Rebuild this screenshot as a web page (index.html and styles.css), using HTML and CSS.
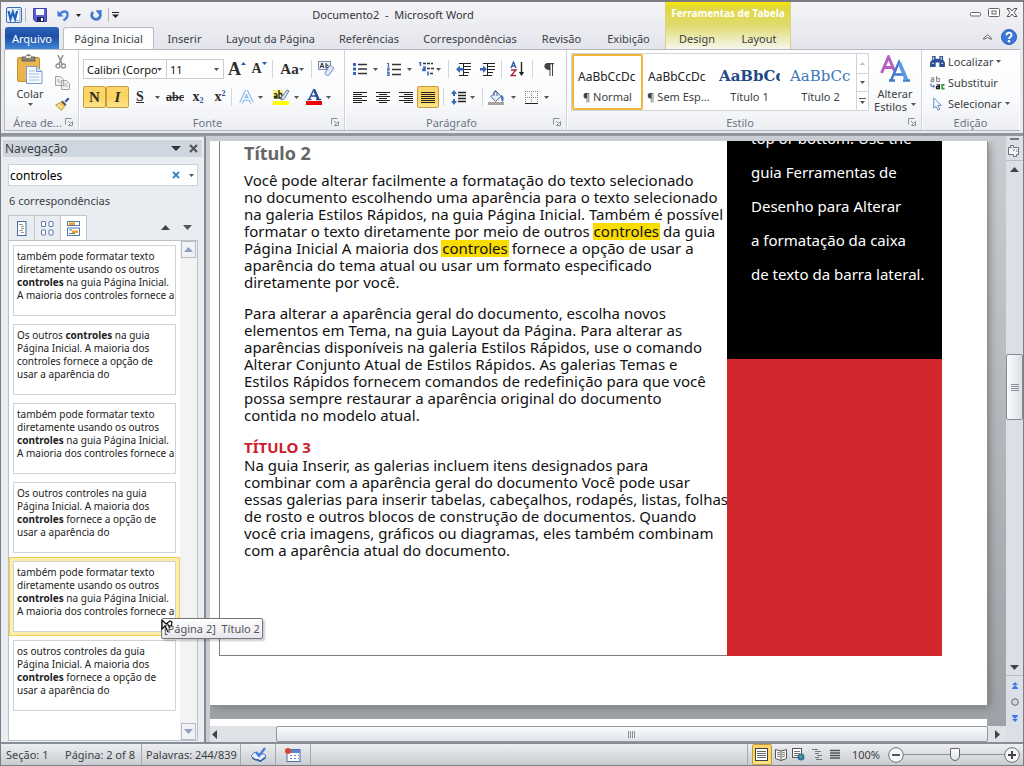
FILE: index.html
```html
<!DOCTYPE html>
<html lang="pt-BR">
<head>
<meta charset="utf-8">
<title>Documento2 - Microsoft Word</title>
<link rel="stylesheet" href="styles.css">
</head>
<body>
<svg class="defs" aria-hidden="true">
  <symbol id="caret" viewBox="0 0 5 3"><path d="M0 0h5L2.500 3z" fill="#555"/></symbol>
  <symbol id="launcher" viewBox="0 0 8 8"><path d="M.5 6.500v-6h6M3 3l3 3M7.500 3.500v4h-4z" fill="none" stroke="#8b9096"/></symbol>
</svg>
<div class="app">
  <header class="header">
    <div class="titlebar">
      <div class="quick">
        <button class="ib w22" aria-label="Word"><svg width="16" height="16" viewBox="0 0 16 16"><rect x=".5" y=".5" width="15" height="15" rx="1.500" fill="#e7f1fb" stroke="#3a6db3"/><path d="M11 2.500h3v11h-4" fill="#fff" stroke="#8fb3de"/><path d="M2.500 4l2 8 2.300-7 2.300 7 2-8" fill="none" stroke="#1f63b8" stroke-width="2.200"/></svg></button>
        <span class="qs"></span>
        <button class="ib w28" aria-label="Salvar"><svg width="14" height="14" viewBox="0 0 14 14"><path d="M.5.5h13v13h-11l-2-2z" fill="#5a5fd4" stroke="#3c41a8"/><path d="M3 1h8v6H3z" fill="#f4f6ff"/><path d="M4 9h7v5H4z" fill="#20245e"/><path d="M8 10h2v3H8z" fill="#fff"/></svg></button>
        <button class="ib w18" aria-label="Desfazer"><svg width="13" height="13" viewBox="0 0 13 13"><path d="M3.500 4.500C6.500 1.500 10.500 2 10.500 5.500c0 2.500-1.500 4.500-4 6" fill="none" stroke="#4a82da" stroke-width="2.500"/><path d="M.5 1.500v6h6z" fill="#3f78d4"/></svg></button>
        <button class="ib w12" aria-label="Opções de desfazer"><svg width="5" height="3" viewBox="0 0 5 3"><path d="M0 0h5L2.500 3z" fill="#222"/></svg></button>
        <button class="ib w24" aria-label="Refazer"><svg width="13" height="13" viewBox="0 0 13 13"><path d="M3 3A4.300 4.300 0 1 0 9.500 3.500" fill="none" stroke="#3f78d4" stroke-width="2.800"/><path d="M5.500 1.200h6.500l-1.500 6z" fill="#3f78d4"/></svg></button>
        <span class="qs"></span>
        <button class="ib w12" aria-label="Personalizar"><svg width="7" height="6" viewBox="0 0 7 6"><path d="M0 0h7v1H0zM0 2.500h7L3.500 6z" fill="#222"/></svg></button>
      </div>
      <h1 class="title">Documento2 &nbsp;- &nbsp;Microsoft Word</h1>
    </div>
    <nav class="tabs">
      <button class="tab file">Arquivo</button>
      <button class="tab active">Página Inicial</button>
      <button class="tab">Inserir</button>
      <button class="tab">Layout da Página</button>
      <button class="tab">Referências</button>
      <button class="tab">Correspondências</button>
      <button class="tab">Revisão</button>
      <button class="tab">Exibição</button>
    </nav>
    <div class="context">
      <div class="ctxname">Ferramentas de Tabela</div>
      <div class="ctxtabs"><button class="tab">Design</button><button class="tab">Layout</button></div>
    </div>
    <div class="wincontrols">
      <button class="ib" aria-label="Minimizar"><svg width="12" height="12" viewBox="0 0 12 12"><rect x=".5" y="5.500" width="10" height="3.500" rx="1" fill="#fff" stroke="#666"/></svg></button>
      <button class="ib" aria-label="Restaurar"><svg width="12" height="12" viewBox="0 0 12 12"><rect x=".5" y="1.500" width="11" height="8" rx="1" fill="#fff" stroke="#666"/><rect x="4" y="4" width="4" height="3" fill="#fff" stroke="#666"/></svg></button>
      <button class="ib" aria-label="Fechar"><svg width="12" height="12" viewBox="0 0 12 12"><path d="M1 1.500h3l2 2.500 2-2.500h3L8 5.500l3 4H8L6 7 4 9.500H1l3-4z" fill="#fff" stroke="#555"/></svg></button>
    </div>
    <div class="helpers">
      <button class="ib" aria-label="Minimizar faixa"><svg width="9" height="6" viewBox="0 0 9 6"><path d="M.7 4L4.500.8 8.300 4v1.300L4.500 3.500.7 5.300z" fill="#fff" stroke="#555" stroke-width=".9"/></svg></button>
      <button class="ib" aria-label="Ajuda"><svg width="16" height="16" viewBox="0 0 16 16"><circle cx="8" cy="8" r="7.500" fill="#3b78d8" stroke="#2a5db0"/><path d="M5.500 6.200c0-3.600 5.200-3.300 5 0C10.400 8 8 8 8 10" fill="none" stroke="#fff" stroke-width="1.900"/><circle cx="8" cy="12.300" r="1.200" fill="#fff"/></svg></button>
    </div>
  </header>

  <section class="ribbon">
    <div class="group g-clip">
      <div class="gbody">
        <button class="big paste">
          <svg width="26" height="30" viewBox="0 0 26 30"><rect x=".5" y="3.500" width="22" height="24" rx="1.500" fill="#eab54e" stroke="#c98f2c"/><path d="M5 7V3h4c0-3 5-3 5 0h4v4z" fill="#8a8378" stroke="#6b655c"/><rect x="9" y="2" width="5" height="2" fill="#e9e4d8"/><path d="M9.500 12.500h10l5.500 5v12H9.500z" fill="#f5f9ff" stroke="#7d9cc9"/><path d="M19.500 12.500v5H25" fill="#cfdff4" stroke="#7d9cc9"/><path d="M12 17h6M12 20h10M12 23h10M12 26h10" stroke="#a9c0e2"/></svg>
          <span>Colar</span>
          <svg width="5" height="3"><use href="#caret"/></svg>
        </button>
        <div class="stack">
          <button class="ib" aria-label="Recortar"><svg width="12" height="14" viewBox="0 0 12 14"><path d="M3 0l4 9M8 0L4 9" stroke="#8f8f8f" stroke-width="1.500"/><circle cx="3" cy="11" r="2" fill="none" stroke="#8f8f8f" stroke-width="1.300"/><circle cx="8.500" cy="11" r="2" fill="none" stroke="#8f8f8f" stroke-width="1.300"/></svg></button>
          <button class="ib" aria-label="Copiar"><svg width="15" height="14" viewBox="0 0 15 14"><path d="M.5.5h5l3 3v6h-8zM6.500 4.500h5l3 3v6h-8z" fill="#f1f1f1" stroke="#a3a3a3"/><path d="M8 8h4M8 10h5M2 4h3M2 6h4" stroke="#b5b5b5"/></svg></button>
          <button class="ib" aria-label="Pincel de formatação"><svg width="15" height="14" viewBox="0 0 15 14"><path d="M9.500 4L13 .5l1.500 1.500L11 5.500z" fill="#3f4fa5"/><path d="M7.500 3.500l4 4L10 9 6 5z" fill="#555" /><path d="M6 5l4 4-3.500 4.500L.5 8z" fill="#f1c863" stroke="#b48a31" stroke-width=".7"/><path d="M3 9l2-1.500M5 11l2-2" stroke="#fff"/></svg></button>
        </div>
      </div>
      <div class="glabel"><span>Área de...</span><svg width="8" height="8"><use href="#launcher"/></svg></div>
    </div>

    <div class="group g-font">
      <div class="gbody rows">
        <div class="row">
          <label class="combo w84"><select aria-label="Fonte"><option>Calibri (Corpo)</option></select><svg width="5" height="3"><use href="#caret"/></svg></label>
          <label class="combo w58"><select aria-label="Tamanho da fonte"><option>11</option></select><svg width="5" height="3"><use href="#caret"/></svg></label>
          <button class="ib w26 serif f17" aria-label="Aumentar fonte">A<svg class="top" width="5" height="3" viewBox="0 0 5 3"><path d="M0 3h5L2.500 0z" fill="#2b57a8"/></svg></button>
          <button class="ib w18 serif f12" aria-label="Reduzir fonte">A<svg class="top" width="5" height="3" viewBox="0 0 5 3"><path d="M0 0h5L2.500 3z" fill="#2b57a8"/></svg></button>
          <span class="sep sl"></span>
          <button class="ib w38 serif f13" aria-label="Maiúsculas e minúsculas">Aa<svg width="5" height="3"><use href="#caret"/></svg></button>
          <span class="sep"></span>
          <button class="ib w28" aria-label="Limpar formatação"><svg width="17" height="16" viewBox="0 0 17 16"><rect x=".5" y=".5" width="12" height="8" fill="#e9eefa" stroke="#7e8bb0"/><path d="M2 7l2-5 2 5M3 5.500h2M8 2v5h1.500q1.500-1.500 0-3H8" fill="none" stroke="#333"/><path d="M12 4l4 3-5 7c-1 1.500-4 0-4-2z" fill="#dfe8fa" stroke="#6f8fc8"/></svg></button>
        </div>
        <div class="row">
          <button class="ib w23 on serif f13 b" aria-label="Negrito">N</button>
          <button class="ib w23 on serif f13 b i" aria-label="Itálico">I</button>
          <button class="ib w22 serif f12 b u" aria-label="Sublinhado">S</button>
          <button class="ib w12" aria-label="Opções de sublinhado"><svg width="5" height="3"><use href="#caret"/></svg></button>
          <button class="ib w24 serif f11 b st" aria-label="Tachado">abc</button>
          <button class="ib w22 serif f12 b" aria-label="Subscrito">x<sub>2</sub></button>
          <button class="ib w22 serif f12 b" aria-label="Sobrescrito">x<sup>2</sup></button>
          <span class="sep"></span>
          <button class="ib w38 gap4" aria-label="Efeitos de texto"><svg width="15" height="14" viewBox="0 0 15 14"><path d="M2 13L7.500 1.500 13 13M4.500 9h6" fill="none" stroke="#8fbdec" stroke-width="4"/><path d="M2 13L7.500 1.500 13 13M4.500 9h6" fill="none" stroke="#fff" stroke-width="1.500"/></svg><svg width="5" height="3"><use href="#caret"/></svg></button>
          <button class="ib w32 gap4" aria-label="Cor do realce"><svg width="17" height="16" viewBox="0 0 17 16"><rect y="12" width="16" height="4" fill="#ffff00"/><path d="M0 1h10v9H0z" fill="#fbf07a"/><path d="M1 5q3-1 3 1v3H2Q0 7.500 4 7M6 1v8h2q2.500-2 0-4.500H6" fill="none" stroke="#222" stroke-width="1.300"/><path d="M14 1l2 1-5 8-3 1 .5-3z" fill="#dce6f4" stroke="#46608c" stroke-width=".8"/></svg><svg width="5" height="3"><use href="#caret"/></svg></button>
          <button class="ib w32 gap4" aria-label="Cor da fonte"><svg width="16" height="16" viewBox="0 0 16 16"><rect y="12" width="16" height="4" fill="#f30000"/><path d="M3 10.500L8 0l5 10.500M5 7h6M1.500 10.500h4M10 10.500h5" fill="none" stroke="#2a4b8f" stroke-width="1.300"/><path d="M8.300 1l3.900 9" stroke="#2a4b8f" stroke-width="2.400"/></svg><svg width="5" height="3"><use href="#caret"/></svg></button>
        </div>
      </div>
      <div class="glabel"><span>Fonte</span><svg width="8" height="8"><use href="#launcher"/></svg></div>
    </div>

    <div class="group g-para">
      <div class="gbody rows">
        <div class="row">
          <button class="ib w34 gap6" aria-label="Marcadores"><svg width="14" height="12" viewBox="0 0 14 12"><path d="M0 0h3v3H0zM0 4.500h3v3H0zM0 9h3v3H0z" fill="#3a66b8"/><path d="M5 1.500h9M5 6h9M5 10.500h9" stroke="#333" stroke-width="1.300"/></svg><svg width="5" height="3"><use href="#caret"/></svg></button>
          <button class="ib w34 gap6" aria-label="Numeração"><svg width="14" height="13" viewBox="0 0 14 13"><path d="M0 .5h1.500V4M0 5h2v1.500H0V8h2.500M0 9.500h2V12.500H0M0 11h2" fill="none" stroke="#3a66b8" stroke-width="1.200"/><path d="M5 1.500h9M5 6.500h9M5 11.500h9" stroke="#333" stroke-width="1.300"/></svg><svg width="5" height="3"><use href="#caret"/></svg></button>
          <button class="ib w28" aria-label="Lista de vários níveis"><svg width="17" height="14" viewBox="0 0 17 14"><path d="M0 .5h1.500V4M4 5h2v3.500H4V7h2M9 9.500v4" fill="none" stroke="#3a66b8" stroke-width="1.600"/><path d="M4 1.500h10M8 6.500h8M11 11.500h4" stroke="#333" stroke-width="1.300" stroke-dasharray="3 1"/></svg><svg width="5" height="3"><use href="#caret"/></svg></button>
          <span class="sep sl"></span>
          <button class="ib w30" aria-label="Diminuir recuo"><svg width="16" height="13" viewBox="0 0 16 13"><path d="M3 .5h12M8 3.500h7M8 6.500h7M8 9.500h5M3 12.500h9M7.500 0v13" stroke="#222"/><path d="M4 2.500v2.500H7.500v2.500H4V10L0 6.200z" fill="#3a66b8"/></svg></button>
          <button class="ib w18" aria-label="Aumentar recuo"><svg width="16" height="13" viewBox="0 0 16 13"><path d="M3 .5h12M8 3.500h7M8 6.500h7M8 9.500h5M3 12.500h9M7.500 0v13" stroke="#222"/><path d="M3 2.500v2.500H0v2.500h3V10l4-3.800z" fill="#3a66b8"/></svg></button>
          <span class="sep sl"></span>
          <button class="ib w30" aria-label="Classificar"><svg width="15" height="16" viewBox="0 0 15 16"><path d="M1 7l2.500-6L6 7M2 5h3" fill="none" stroke="#2f59a6" stroke-width="1.300"/><path d="M1 9h5l-5 5.500h5" fill="none" stroke="#a32a38" stroke-width="1.300"/><path d="M11.500 1v11" stroke="#222" stroke-width="1.400"/><path d="M8.800 11h5.400l-2.700 4z" fill="#222"/></svg></button>
          <span class="sep"></span>
          <button class="ib w32" aria-label="Mostrar tudo"><svg width="10" height="13" viewBox="0 0 10 13"><path d="M3.500 0H10v1.200H9V13H8V1.200H6.500V13h-1V7C-1 7-1 0 3.500 0z" fill="#444"/></svg></button>
        </div>
        <div class="row">
          <button class="ib w23" aria-label="Alinhar à esquerda"><svg width="14" height="11" viewBox="0 0 14 11"><path d="M0 .5h14M0 2.500h9M0 4.500h14M0 6.500h9M0 8.500h14M0 10.500h9" stroke="#222"/></svg></button>
          <button class="ib w23" aria-label="Centralizar"><svg width="14" height="11" viewBox="0 0 14 11"><path d="M0 .5h14M3 2.500h8M0 4.500h14M3 6.500h8M0 8.500h14M3 10.500h8" stroke="#222"/></svg></button>
          <button class="ib w23" aria-label="Alinhar à direita"><svg width="14" height="11" viewBox="0 0 14 11"><path d="M0 .5h14M5 2.500h9M0 4.500h14M5 6.500h9M0 8.500h14M5 10.500h9" stroke="#222"/></svg></button>
          <button class="ib w22 on" aria-label="Justificar"><svg width="14" height="11" viewBox="0 0 14 11"><path d="M0 .5h14M0 2.500h14M0 4.500h14M0 6.500h14M0 8.500h14M0 10.500h14" stroke="#222"/></svg></button>
          <span class="sep sl"></span>
          <button class="ib w38 gap4" aria-label="Espaçamento"><svg width="15" height="15" viewBox="0 0 15 15"><path d="M3 0l3 4H4v2H2V4H0zM3 15l3-4H4V9H2v2H0z" fill="#3a66b8"/><path d="M7 2.500h8M7 5.500h8M7 8.500h8M7 11.500h8" stroke="#222" stroke-width="1.300"/></svg><svg width="5" height="3"><use href="#caret"/></svg></button>
          <span class="sep"></span>
          <button class="ib w38 gap6" aria-label="Sombreamento"><svg width="17" height="15" viewBox="0 0 17 15"><path d="M8 1l5 5.500-5.500 5L3 6.500z" fill="#e6effb" stroke="#49638f"/><path d="M6 6V2q1.500-3 3 0v4" fill="none" stroke="#49638f"/><path d="M13 5q4 1 2 7-2-1-2-4z" fill="#3f74c8"/><path d="M0 13.500h16" stroke="#aaa49a" stroke-width="3"/></svg><svg width="5" height="3"><use href="#caret"/></svg></button>
          <button class="ib w32 gap6" aria-label="Bordas"><svg width="13" height="13" viewBox="0 0 13 13"><path d="M.5 0v12M6.500 0v12M12.500 0v12M0 .5h13M0 6.500h13" stroke="#888" stroke-dasharray="1 1"/><path d="M0 12.500h13" stroke="#222"/></svg><svg width="5" height="3"><use href="#caret"/></svg></button>
        </div>
      </div>
      <div class="glabel"><span>Parágrafo</span><svg width="8" height="8"><use href="#launcher"/></svg></div>
    </div>

    <div class="group g-style">
      <div class="gbody">
        <div class="gallery">
          <button class="style sel"><span class="sample">AaBbCcDc</span><span>¶ Normal</span></button>
          <button class="style"><span class="sample">AaBbCcDc</span><span>¶ Sem Esp...</span></button>
          <button class="style"><span class="sample t1">AaBbCc</span><span>Título 1</span></button>
          <button class="style"><span class="sample t2">AaBbCc</span><span>Título 2</span></button>
          <div class="gscroll">
            <button class="ib" aria-label="Acima"><svg width="5" height="3" viewBox="0 0 5 3"><path d="M0 3h5L2.500 0z" fill="#bbb"/></svg></button>
            <button class="ib" aria-label="Abaixo"><svg width="5" height="3"><use href="#caret"/></svg></button>
            <button class="ib" aria-label="Mais"><svg width="7" height="6" viewBox="0 0 7 6"><path d="M0 0h7v1H0zM1 3h5L3.500 6z" fill="#555"/></svg></button>
          </div>
        </div>
        <button class="big change">
          <svg width="30" height="28" viewBox="0 0 30 28"><path d="M1.500 18L8.500 2l6 14M4 12.500h8" fill="none" stroke="#b45fc0" stroke-width="3"/><path d="M11 25.500L19 7l8 18.500M14 19.500h10M9 25.500h6M23 25.500h7" fill="none" stroke="#3f78cc" stroke-width="2.400"/><path d="M19.500 8l7 17" stroke="#5f98e4" stroke-width="3.800"/></svg>
          <span>Alterar</span>
          <span>Estilos <svg width="5" height="3"><use href="#caret"/></svg></span>
        </button>
      </div>
      <div class="glabel"><span>Estilo</span><svg width="8" height="8"><use href="#launcher"/></svg></div>
    </div>

    <div class="group g-edit">
      <div class="gbody edits">
        <button class="ed"><svg width="15" height="13" viewBox="0 0 16 14"><path d="M2 1h4v3h4V1h4v4l2 3v5H10V8H6v5H0V8l2-3z" fill="#2c4f8f"/><path d="M2 9h2M12 9h2M3.500 2v3M12 2v3" stroke="#b9cdee" stroke-width="1.500"/></svg><span>Localizar</span><svg width="5" height="3"><use href="#caret"/></svg></button>
        <button class="ed"><svg width="15" height="14" viewBox="0 0 16 15"><path d="M1 2h3v4H1V4h3M7 0v6h3V2.500H7" fill="none" stroke="#777"/><path d="M1 8v3h3M3 9.500L5 11l-2 1.500" fill="none" stroke="#3a66b8"/><path d="M7 9.500h3v4H7v-2h3" fill="none" stroke="#222" stroke-width="1.500"/><path d="M15.500 9.500H13v4h2.500" fill="none" stroke="#2f8f3a" stroke-width="1.700"/></svg><span>Substituir</span></button>
        <button class="ed"><svg width="15" height="14" viewBox="0 0 16 14"><path d="M4 .5v11l2.500-2 2 4 2-1-2-4H12z" fill="#f3f8ff" stroke="#5f86bf"/></svg><span>Selecionar</span><svg width="5" height="3"><use href="#caret"/></svg></button>
      </div>
      <div class="glabel"><span>Edição</span></div>
    </div>
  </section>

  <main class="work">
    <aside class="nav">
      <div class="navhead"><span>Navegação</span>
        <button class="ib" aria-label="Opções"><svg width="10" height="5" viewBox="0 0 10 5"><path d="M0 0h10L5 5z" fill="#333"/></svg></button>
        <button class="ib" aria-label="Fechar painel"><svg width="9" height="9" viewBox="0 0 9 9"><path d="M1 1l7 7M8 1L1 8" stroke="#555" stroke-width="2.200"/></svg></button>
      </div>
      <div class="search">
        <input type="text" value="controles" aria-label="Pesquisar documento">
        <button class="ib" aria-label="Limpar"><svg width="8" height="8" viewBox="0 0 8 8"><path d="M1 1l6 6M7 1L1 7" stroke="#2f86c4" stroke-width="1.800"/></svg></button>
        <button class="ib" aria-label="Opções de pesquisa"><svg width="5" height="3"><use href="#caret"/></svg></button>
      </div>
      <div class="count">6 correspondências</div>
      <div class="ntabs">
        <button class="ntab" aria-label="Títulos"><svg width="10" height="15" viewBox="0 0 10 15"><rect x=".5" y=".5" width="8.500" height="14" fill="#fff" stroke="#4a6b9a"/><path d="M2 3.500h4M4 5.500h3M4 7.500h3M2 9.500h4M4 11.500h3" stroke="#999"/></svg></button>
        <button class="ntab" aria-label="Páginas"><svg width="13" height="15" viewBox="0 0 13 15"><g fill="#fff" stroke="#5a79a8"><rect x=".5" y=".5" width="4" height="5" rx=".5"/><rect x="8" y=".5" width="4" height="5" rx=".5"/><rect x=".5" y="9" width="4" height="5" rx=".5"/><rect x="8" y="9" width="4" height="5" rx=".5"/></g></svg></button>
        <button class="ntab cur" aria-label="Resultados"><svg width="13" height="15" viewBox="0 0 13 15"><rect x=".5" y=".5" width="12" height="4" fill="#fff" stroke="#5a79a8"/><rect x=".5" y="7" width="12" height="7.500" fill="#fff" stroke="#5a79a8"/><path d="M2 1.500h6v2.500H2zM5 9.500h6v2.500H5z" fill="#f0a21d"/><path d="M2 9h3M2 12.500h6" stroke="#5a79a8"/></svg></button>
        <span class="spring"></span>
        <button class="ib w22" aria-label="Anterior"><svg width="9" height="5" viewBox="0 0 9 5"><path d="M0 5h9L4.500 0z" fill="#444"/></svg></button>
        <button class="ib w22" aria-label="Próximo"><svg width="9" height="5" viewBox="0 0 9 5"><path d="M0 0h9L4.500 5z" fill="#555"/></svg></button>
      </div>
      <div class="results">
        <div class="list">
          <button class="hit">também pode formatar texto<br>diretamente usando os outros<br><b>controles</b> na guia Página Inicial.<br>A maioria dos controles fornece a</button>
          <button class="hit">Os outros <b>controles</b> na guia<br>Página Inicial. A maioria dos<br>controles fornece a opção de<br>usar a aparência do</button>
          <button class="hit">também pode formatar texto<br>diretamente usando os outros<br><b>controles</b> na guia Página Inicial.<br>A maioria dos controles fornece a</button>
          <button class="hit">Os outros controles na guia<br>Página Inicial. A maioria dos<br><b>controles</b> fornece a opção de<br>usar a aparência do</button>
          <button class="hit hot">também pode formatar texto<br>diretamente usando os outros<br><b>controles</b> na guia Página Inicial.<br>A maioria dos controles fornece a</button>
          <button class="hit">os outros controles da guia<br>Página Inicial. A maioria dos<br><b>controles</b> fornece a opção de<br>usar a aparência do</button>
        </div>
        <div class="lscroll">
          <button aria-label="Rolar para cima"><svg width="9" height="5" viewBox="0 0 9 5"><path d="M0 5h9L4.500 0z" fill="#8f9fc4"/></svg></button>
          <button aria-label="Rolar para baixo"><svg width="9" height="5" viewBox="0 0 9 5"><path d="M0 0h9L4.500 5z" fill="#8f9fc4"/></svg></button>
        </div>
      </div>
      <div class="tip">[Página 2] &nbsp;Título 2</div>
      <svg class="cursor" width="13" height="14" viewBox="0 0 13 14"><path d="M1 1v9l3-3 3 6M1 1l4 4 4-3 2 1-1 5M6 4l3 5" fill="none" stroke="#111" stroke-width="1.200"/></svg>
    </aside>

    <div class="docarea">
      <div class="canvas">
        <article class="page">
          <div class="text">
            <h2>Título 2</h2>
            <p>Você pode alterar facilmente a formatação do texto selecionado<br>no documento escolhendo uma aparência para o texto selecionado<br>na galeria Estilos Rápidos, na guia Página Inicial. Também é possível<br>formatar o texto diretamente por meio de outros <mark>controles</mark> da guia<br>Página Inicial A maioria dos <mark>controles</mark> fornece a opção de usar a<br>aparência do tema atual ou usar um formato especificado<br>diretamente por você.</p>
            <p>Para alterar a aparência geral do documento, escolha novos<br>elementos em Tema, na guia Layout da Página. Para alterar as<br>aparências disponíveis na galeria Estilos Rápidos, use o comando<br>Alterar Conjunto Atual de Estilos Rápidos. As galerias Temas e<br>Estilos Rápidos fornecem comandos de redefinição para que você<br>possa sempre restaurar a aparência original do documento<br>contida no modelo atual.</p>
            <h3>TÍTULO 3</h3>
            <p>Na guia Inserir, as galerias incluem itens designados para<br>combinar com a aparência geral do documento Você pode usar<br>essas galerias para inserir tabelas, cabeçalhos, rodapés, listas, folhas<br>de rosto e outros blocos de construção de documentos. Quando<br>você cria imagens, gráficos ou diagramas, eles também combinam<br>com a aparência atual do documento.</p>
          </div>
          <div class="side">
            <div class="black"><p>top or bottom. Use the<br>guia Ferramentas de<br>Desenho para Alterar<br>a formatação da caixa<br>de texto da barra lateral.</p></div>
          </div>
        </article>
        <div class="page2"></div>
      </div>
      <div class="hscroll">
        <button class="ib" aria-label="Rolar à esquerda"><svg width="5" height="9" viewBox="0 0 5 9"><path d="M5 0v9L0 4.500z" fill="#444"/></svg></button>
        <div class="hthumb"><svg width="8" height="7" viewBox="0 0 8 7"><path d="M.5 0v7M2.500 0v7M4.500 0v7M6.500 0v7" stroke="#8a8f96"/></svg></div>
        <button class="ib" aria-label="Rolar à direita"><svg width="5" height="9" viewBox="0 0 5 9"><path d="M0 0v9l5-4.500z" fill="#444"/></svg></button>
      </div>
    </div>

    <div class="vscroll">
      <button class="ib split" aria-label="Dividir"></button>
      <button class="ib ruler" aria-label="Régua"><svg width="13" height="13" viewBox="0 0 13 13"><path d="M.5 3.500h2v-2h3v2h5v7h-2v2h-3v-2h-5z" fill="#f8f8fb" stroke="#6f6f78"/><path d="M3 3l3 4M6 6h3v3" stroke="#6f6f78" stroke-dasharray="1 1" fill="none"/></svg></button>
      <button class="ib up" aria-label="Rolar documento para cima"><svg width="9" height="5" viewBox="0 0 9 5"><path d="M0 5h9L4.500 0z" fill="#444"/></svg></button>
      <div class="track"><div class="vthumb"><svg width="8" height="7" viewBox="0 0 8 7"><path d="M0 .5h8M0 2.500h8M0 4.500h8M0 6.500h8" stroke="#8a8f96"/></svg></div></div>
      <button class="ib down" aria-label="Rolar documento para baixo"><svg width="9" height="5" viewBox="0 0 9 5"><path d="M0 0h9L4.500 5z" fill="#444"/></svg></button>
      <div class="browse">
        <button class="ib" aria-label="Página anterior"><svg width="6" height="7" viewBox="0 0 6 7"><path d="M3 0l3 3H0zM3 3l3 3H0zM0 6h6v1H0z" fill="#3f78ee"/></svg></button>
        <button class="ib" aria-label="Selecionar objeto"><svg width="8" height="8" viewBox="0 0 8 8"><circle cx="4" cy="4" r="3.300" fill="#d4d8de" stroke="#666"/></svg></button>
        <button class="ib" aria-label="Próxima página"><svg width="6" height="7" viewBox="0 0 6 7"><path d="M3 7L0 4h6zM3 4L0 1h6zM0 0h6v1H0z" fill="#3f78ee"/></svg></button>
      </div>
    </div>
  </main>

  <footer class="status">
    <button class="st0 s1"><span>Seção: 1</span></button>
    <button class="st0 s2">Página: 2 of 8</button>
    <button class="st0 s3">Palavras: 244/839</button>
    <button class="st0 s4" aria-label="Revisão de texto"><svg width="17" height="15" viewBox="0 0 17 15"><path d="M1 9l4-4 4 2 5 0 2 2-6 5q-2-2-4-1z" fill="#e8effa" stroke="#5a7bb0"/><path d="M2 11l4 2q2-1 4 1.500l6-4" fill="none" stroke="#34589a" stroke-width="1.300"/><path d="M6 5l3 4 6-8" fill="none" stroke="#3f7de0" stroke-width="2.200"/></svg></button>
    <button class="st0 s4" aria-label="Macros"><svg width="16" height="14" viewBox="0 0 16 14"><rect x="2" y="1.500" width="13" height="12" fill="#fff" stroke="#4d6fae"/><path d="M2 2h13v3H2z" fill="#5d86cf"/><path d="M5 7.500h2M9 7.500h2M13 7.500h1M5 10.500h2M9 10.500h2M13 10.500h1" stroke="#5d86cf"/><circle cx="3" cy="3" r="3" fill="#d8452c"/></svg></button>
    <span class="spring"></span>
    <div class="views">
      <button class="ib w20 on" aria-label="Layout de impressão"><svg width="13" height="13" viewBox="0 0 13 13"><rect x=".5" y=".5" width="12" height="12" fill="#fff" stroke="#444"/><path d="M2 3.500h9M2 5.500h9M2 7.500h9M2 9.500h9" stroke="#666"/></svg></button>
      <button class="ib w18" aria-label="Leitura"><svg width="12" height="12" viewBox="0 0 12 12"><path d="M6 2L.5.5v9L6 11.500l5.500-2v-9zv9.500" fill="#fff" stroke="#555"/><path d="M2 3l3 1M2 5l3 1M2 7l3 1M7 4l3-1M7 6l3-1M7 8l3-1" stroke="#777"/></svg></button>
      <button class="ib w18" aria-label="Layout da Web"><svg width="13" height="13" viewBox="0 0 13 13"><rect x=".5" y=".5" width="9" height="9" fill="#fff" stroke="#555"/><path d="M2 3.500h6M2 5.500h6M2 7.500h4" stroke="#777"/><circle cx="9" cy="9" r="3.500" fill="#2f6fb0"/><path d="M7 8q2-2 3 0t-1 3" fill="#4fae50"/></svg></button>
      <button class="ib w18" aria-label="Estrutura de tópicos"><svg width="10" height="11" viewBox="0 0 10 11"><path d="M0 .5h6M3 2.500h6M3 4.500h4M5 6.500h5M3 8.500h4M4 10.500h6" stroke="#777"/></svg></button>
      <button class="ib w18" aria-label="Rascunho"><svg width="10" height="11" viewBox="0 0 10 11"><path d="M0 1.500h10M0 4h10M0 6.500h10M0 9h10" stroke="#555" stroke-width="1.300"/></svg></button>
    </div>
    <button class="st0 pct">100%</button>
    <div class="zoom">
      <button class="ib" aria-label="Reduzir"><svg width="16" height="16" viewBox="0 0 16 16"><circle cx="8" cy="8" r="7.300" fill="#f6f7f9" stroke="#6a6f76"/><path d="M4 8h8" stroke="#555" stroke-width="2"/></svg></button>
      <input type="range" min="0" max="100" value="51" aria-label="Zoom">
      <button class="ib" aria-label="Ampliar"><svg width="16" height="16" viewBox="0 0 16 16"><circle cx="8" cy="8" r="7.300" fill="#f6f7f9" stroke="#6a6f76"/><path d="M4 8h8M8 4v8" stroke="#444" stroke-width="2"/></svg></button>
    </div>
  </footer>
</div>
</body>
</html>
```
FILE: styles.css
```css
* { box-sizing: border-box; }
body { margin: 0; font-family: "Noto Sans", "Open Sans", sans-serif; font-size: 11px; color: #3c3f44; }
button, input, select { font: inherit; color: inherit; margin: 0; padding: 0; border: 0; background: none; border-radius: 0; }
h1, h2, h3, p { margin: 0; font-weight: 400; }
svg { display: block; flex: none; }
.defs { position: absolute; width: 0; height: 0; }
.app { height: 100vh; display: flex; flex-direction: column; border: 1px solid #7b7d80; border-top-width: 2px; background: #e7eaee; overflow: hidden; }
.ib { display: flex; align-items: center; justify-content: center; flex: none; }
.spring { flex: 1; }

.w12 { width: 12px; } .w18 { width: 18px; } .w20 { width: 20px; } .w22 { width: 22px; } .w23 { width: 23px; }
.w24 { width: 24px; } .w26 { width: 26px; } .w28 { width: 28px; } .w30 { width: 30px; } .w32 { width: 32px; }
.w34 { width: 34px; } .w38 { width: 38px; } .w58 { width: 58px; } .w84 { width: 84px; }
.gap4 { gap: 4px; } .gap6 { gap: 6px; }

.header { display: grid; grid-template-columns: 664px 126px 1fr; grid-template-rows: 25px 22px; background: linear-gradient(#f4f4f8, #e4e5ec); flex: none; }
.titlebar { display: flex; align-items: center; }
.quick { display: flex; align-items: center; padding: 1px 0 0 2px; }
.qs { width: 1px; height: 14px; background: #b4b6ba; }
.title { flex: 1; text-align: center; font-size: 11px; line-height: 24px; color: #333; }
.tabs { grid-row: 2; display: grid; grid-template-columns: 54px 91px 65px 111px 86px 116px 67px 67px; padding-left: 4px; }
.tab { text-align: center; white-space: nowrap; }
.file { background: linear-gradient(#2a62bd, #1d4fa3 45%, #3f86d8); color: #fff; border-radius: 3px 3px 0 0; }
.active { background: linear-gradient(#fbfcfd, #fff); border: 1px solid #b9bec5; border-bottom: 0; border-radius: 3px 3px 0 0; margin-left: 4px; margin-right: -4px; }
.active + .tab { padding-left: 4px; }
.context { grid-row: 1 / 3; grid-column: 2; display: grid; grid-template-rows: 22px 25px; background: linear-gradient(#fbe900, #dfd83c 12%, #e0db70 50%, #f6f6ee); border: solid #d8d37c; border-width: 0 1px; }
.ctxname { display: flex; align-items: center; justify-content: center; color: #fff; font-weight: 700; font-size: 10px; white-space: nowrap; }
.ctxtabs { display: grid; grid-template-columns: 1fr 1fr; padding-top: 3px; }
.wincontrols { grid-column: 3; grid-row: 1; display: flex; justify-content: flex-end; gap: 6px; padding: 0 5px 3px 0; }
.helpers { grid-column: 3; grid-row: 2; display: flex; justify-content: flex-end; gap: 9px; padding: 0 6px 2px 0; }

.ribbon { display: flex; flex: none; margin: 0 3px; height: 82px; background: linear-gradient(#fff, #fafbfc 60%, #eceef2); border: 1px solid #b4b9bf; }
.group { display: flex; flex-direction: column; border-right: 1px solid #cfd3d8; box-shadow: 1px 0 #fff; }
.g-clip { width: 74px; } .g-font { width: 266px; } .g-para { width: 222px; } .g-style { width: 355px; } .g-edit { flex: 1; border-right: 0; }
.gbody { display: flex; height: 64px; flex: none; }
.glabel { display: flex; align-items: center; height: 16px; padding: 0 5px; color: #6c7687; }
.glabel span { flex: 1; text-align: center; white-space: nowrap; }
.big { display: flex; flex-direction: column; align-items: center; line-height: 13px; }
.paste { width: 50px; padding-top: 4px; gap: 3px; }
.stack { display: flex; flex-direction: column; justify-content: space-around; flex: 1; padding-top: 2px; align-items: flex-start; }
.rows { flex-direction: column; gap: 6px; padding: 8px 4px 0; }
.g-para .rows { padding-left: 3px; }
.row { display: flex; align-items: center; height: 22px; }
.row .ib { height: 22px; }
.sep { width: 1px; height: 18px; background: #d3d6da; flex: none; }
.sl { margin-left: 4px; }
.combo { display: flex; align-items: center; height: 20px; border: 1px solid #c9ccd1; background: #fff; padding-right: 4px; }
.combo + .combo { border-left: 0; }
.combo select { flex: 1; min-width: 0; height: 18px; appearance: none; padding-left: 3px; overflow: hidden; color: #111; }
.serif { font-family: "Liberation Serif", serif; font-weight: 700; color: #2c2c2c; }
.f11 { font-size: 12px; } .f12 { font-size: 14px; } .f13 { font-size: 15px; } .f17 { font-size: 18px; }
.i { font-style: italic; } .u { text-decoration: underline; } .st { text-decoration: line-through; }
.row sub, .row sup { font-size: 8px; color: #2b57a8; line-height: 8px; }
.row sub { align-self: flex-end; padding-bottom: 3px; } .row sup { align-self: flex-start; padding-top: 4px; }
.top { align-self: flex-start; margin-top: 4px; }
.on { background: linear-gradient(#fdd66e, #fbd45e 50%, #fde58c); border: 1px solid #c79a3c; border-radius: 2px; }
.gallery { display: flex; margin: 3px 0 0 4px; border: 1px solid #d0d4d9; background: #fff; width: 298px; height: 58px; }
.style { width: 71px; display: flex; flex-direction: column; align-items: center; overflow: hidden; white-space: nowrap; padding: 11px 5px 0; line-height: 18px; }
.sel { border: 2px solid #f0b73c; border-radius: 2px; padding: 9px 4px 0; }
.sample { font-size: 12px; line-height: 23px; height: 23px; color: #222; width: 100%; text-align: left; overflow: hidden; }
.t1 { font-family: "DejaVu Serif", "Liberation Serif", serif; font-size: 15px; font-weight: 700; color: #1f4a86; }
.t2 { font-family: "DejaVu Serif", "Liberation Serif", serif; font-size: 15px; color: #3d77bc; }
.gscroll { flex: 1; display: grid; grid-template-rows: 1fr 1fr 1fr; border-left: 1px solid #d0d4d9; }
.gscroll .ib + .ib { border-top: 1px solid #d0d4d9; }
.change { flex: 1; padding-top: 5px; }
.change span { display: flex; align-items: center; gap: 4px; }
.change svg:first-child { margin-bottom: 4px; }
.edits { flex-direction: column; padding: 1px 0 0 8px; }
.ed { display: flex; align-items: center; gap: 3px; height: 21px; white-space: nowrap; }

.work { flex: 1; min-height: 0; display: flex; border-top: 3px solid #8f969d; margin-top: 2px; background: #c9cdd3; }
.nav { position: relative; width: 205px; flex: none; display: flex; flex-direction: column; background: #e9edf1; border-right: 2px solid #858b93; border-top: 1px solid #a9afb6; padding: 3px 0 1px; }
.navhead { display: flex; align-items: center; gap: 8px; height: 17px; margin: 0 2px 0 2px; padding: 0 4px 0 2px; background: #cfd6df; font-size: 12px; }
.navhead span { flex: 1; }
.search { display: flex; align-items: center; gap: 9px; height: 22px; margin: 7px 6px 0 7px; padding-right: 3px; border: 1px solid #cfd2d6; background: #fff; }
.search input { flex: 1; min-width: 0; font-size: 12px; color: #000; outline: 0; padding-left: 1px; }
.count { margin: 7px 8px 0; line-height: 16px; }
.ntabs { display: flex; height: 25px; margin: 6px 6px 0 7px; }
.ntab { width: 26px; display: flex; align-items: center; justify-content: center; border: 1px solid #c2c6cb; border-left-width: 0; border-bottom: 0; }
.ntab:first-child { border-left-width: 1px; width: 27px; }
.cur { background: #fff; margin-bottom: -1px; }
.results { flex: 1; min-height: 0; display: flex; margin: 0 6px 0 7px; border: 1px solid #bcc0c6; background: #fff; }
.list { flex: 1; min-width: 0; display: flex; flex-direction: column; gap: 8px; padding: 4px; }
.hit { height: 71px; flex: none; border: 1px solid #cfd2d6; background: #fff; text-align: left; font-size: 10px; line-height: 13px; padding: 0 3px 10px; color: #222; white-space: nowrap; }
.hot { box-shadow: 0 0 0 3px #fdeeae, 0 0 0 4px #f0cd58; }
.lscroll { width: 17px; display: flex; flex-direction: column; justify-content: space-between; background: #f3f3f3; padding: 0 1px; }
.lscroll button { height: 17px; border: 1px solid #b7bdc8; background: #f0f2f5; display: flex; align-items: center; justify-content: center; }
.tip { position: absolute; left: 160px; top: 481px; z-index: 3; padding: 0 2px; line-height: 19px; border: 1px solid #767676; border-radius: 2px; background: linear-gradient(#fff, #e6e6f0); box-shadow: 2px 2px 2px #0003; white-space: nowrap; color: #555; }
.cursor { position: absolute; left: 160px; top: 482px; z-index: 4; }

.docarea { flex: 1; min-width: 0; display: flex; flex-direction: column; padding: 5px 0 0 4px; }
.canvas { flex: 1; min-height: 0; display: flex; flex-direction: column; gap: 14px; background: linear-gradient(#c9cdd1, #9da2a6); padding-right: 19px; overflow: hidden; }
.page { flex: 1; min-height: 0; display: flex; background: #fff; padding: 0 45px 49px 9px; box-shadow: 1px 1px 0 #8b9094, 3px 2px 8px #5558; }
.page2 { height: 7px; background: #fff; box-shadow: 0 0 0 1px #a3a7ab; }
.text { flex: 1; min-width: 0; border: solid #7e7e7e; border-width: 0 0 1px 1px; padding-left: 24px; font-size: 15px; line-height: 17px; color: #111; white-space: nowrap; }
.text h2 { font-size: 18px; font-weight: 700; line-height: 24px; color: #666; margin-bottom: 7px; }
.text p + p { margin-top: 14px; }
.text h3 { font-size: 15px; font-weight: 700; color: #c9202c; margin: 15px 0 1px; }
mark { display: inline-block; line-height: 17px; background: #f9dc00; color: inherit; padding: 0 1px; margin: 0 -1px; }
.side { width: 215px; flex: none; background: #d2282d; overflow: hidden; }
.black { height: 218px; background: #000; color: #fff; font-size: 15px; line-height: 34px; padding-left: 24px; white-space: nowrap; overflow: hidden; }
.black p { margin-top: -20px; }
.hscroll { height: 16px; display: flex; flex: none; background: #dfe3e8; }
.hscroll .ib { width: 8px; }
.hthumb { flex: 1; margin-left: 58px; display: flex; align-items: center; justify-content: center; border: 1px solid #9299a3; border-radius: 2px; background: linear-gradient(#fafbfc, #dfe3e9); }
.hscroll .hthumb + .ib { width: 18px; }
.vscroll { width: 17px; display: flex; flex-direction: column; background: #dbe0e8; padding-top: 1px; }
.split { margin: 1px 4px 0; height: 2px; background: #777; }
.ruler { height: 21px; border-bottom: 1px solid #b9bec6; }
.up { height: 16px; }
.track { flex: 1; display: flex; flex-direction: column; padding-top: 177px; }
.vthumb { height: 66px; border: 1px solid #858c96; border-radius: 2px; background: linear-gradient(90deg, #fafbfc, #dbe0e7); display: flex; align-items: center; justify-content: center; }
.down { height: 15px; }
.browse { height: 67px; border-top: 1px solid #b9bec6; display: flex; flex-direction: column; gap: 9px; padding-top: 6px; }

.status { height: 23px; flex: none; display: flex; align-items: center; border-top: 2px solid #878d94; background: linear-gradient(#eceef0, #c9cdd2); }
.st0 { height: 100%; display: flex; align-items: center; white-space: nowrap; }
.s1 { width: 58px; padding-left: 5px; } .s2 { width: 83px; padding-left: 6px; border-right: 1px solid #a5a9ae; } .s3 { width: 99px; padding-left: 4px; border-right: 1px solid #a5a9ae; }
.s4 { width: 35px; justify-content: center; border-right: 1px solid #a5a9ae; }
.views { display: flex; height: 100%; padding-left: 4px; border-left: 1px solid #a5a9ae; }
.pct { padding: 0 8px; }
.zoom { display: flex; align-items: center; padding-right: 3px; }
.zoom input { appearance: none; width: 100px; height: 16px; background: linear-gradient(#8d9299, #8d9299) center / 100% 1px no-repeat; }
.zoom input::-webkit-slider-thumb { appearance: none; width: 10px; height: 13px; background: linear-gradient(#fff, #dcdfe3); border: 1px solid #666; border-radius: 1px 1px 5px 5px; }
```
